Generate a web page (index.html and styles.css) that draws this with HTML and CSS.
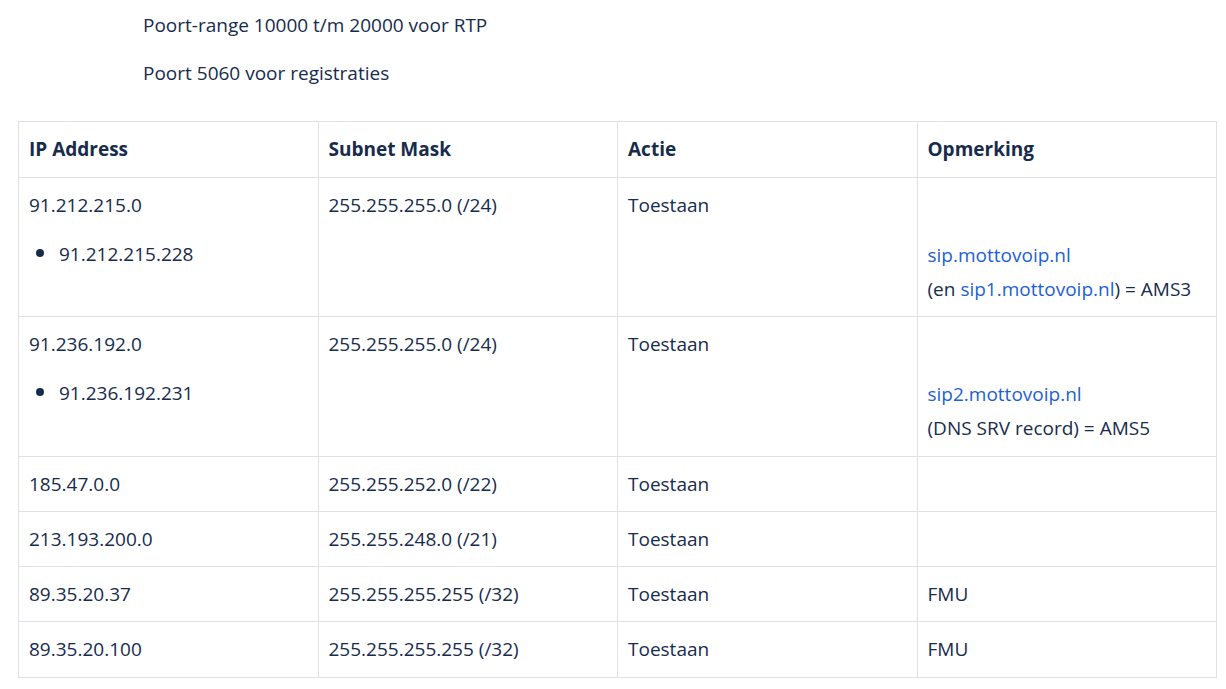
FILE: index.html
```html
<!DOCTYPE html>
<html lang="nl">
<head>
<meta charset="utf-8">
<title>Poorten en IP-adressen</title>
<link rel="stylesheet" href="styles.css">
</head>
<body>
<div class="page">
  <div class="intro">
    <p>Poort-range 10000 t/m 20000 voor RTP</p>
    <p>Poort 5060 voor registraties</p>
  </div>
  <table class="ip-table">
    <thead>
      <tr>
        <th>IP Address</th>
        <th>Subnet Mask</th>
        <th>Actie</th>
        <th>Opmerking</th>
      </tr>
    </thead>
    <tbody>
      <tr>
        <td>
          <p>91.212.215.0</p>
          <ul><li>91.212.215.228</li></ul>
        </td>
        <td><p>255.255.255.0 (/24)</p></td>
        <td><p>Toestaan</p></td>
        <td>
          <p>&nbsp;</p>
          <p><a href="#">sip.mottovoip.nl</a><br>(en <a href="#">sip1.mottovoip.nl</a>) = AMS3</p>
        </td>
      </tr>
      <tr>
        <td>
          <p>91.236.192.0</p>
          <ul><li>91.236.192.231</li></ul>
        </td>
        <td><p>255.255.255.0 (/24)</p></td>
        <td><p>Toestaan</p></td>
        <td>
          <p>&nbsp;</p>
          <p><a href="#">sip2.mottovoip.nl</a><br>(DNS SRV record) = AMS5</p>
        </td>
      </tr>
      <tr>
        <td><p>185.47.0.0</p></td>
        <td><p>255.255.252.0 (/22)</p></td>
        <td><p>Toestaan</p></td>
        <td></td>
      </tr>
      <tr>
        <td><p>213.193.200.0</p></td>
        <td><p>255.255.248.0 (/21)</p></td>
        <td><p>Toestaan</p></td>
        <td></td>
      </tr>
      <tr>
        <td><p>89.35.20.37</p></td>
        <td><p>255.255.255.255 (/32)</p></td>
        <td><p>Toestaan</p></td>
        <td><p>FMU</p></td>
      </tr>
      <tr>
        <td><p>89.35.20.100</p></td>
        <td><p>255.255.255.255 (/32)</p></td>
        <td><p>Toestaan</p></td>
        <td><p>FMU</p></td>
      </tr>
    </tbody>
  </table>
</div>
</body>
</html>
```
FILE: styles.css
```css
html, body {
  margin: 0;
  padding: 0;
  background: #ffffff;
}

body {
  font-family: "Open Sans", "Noto Sans", "Liberation Sans", sans-serif;
  font-size: 19px;
  line-height: 34px;
  color: #172b4d;
}

.page {
  padding: 8px 9px 0 18px;
}

.intro {
  padding-left: 125px;
}

.intro p {
  margin: 0 0 14px 0;
}

.ip-table {
  width: 1199px;
  border-collapse: collapse;
  table-layout: fixed;
  margin-top: 31px;
}

.ip-table th,
.ip-table td {
  border: 1px solid #dfe1e6;
  padding: 10px 10px 10.3px;
  text-align: left;
  vertical-align: top;
  width: 25%;
}

.ip-table th {
  font-weight: 700;
  color: #172b4d;
  padding-bottom: 11px;
}

.ip-table p {
  margin: 0;
}

.ip-table p + p {
  margin-top: 16px;
}

.ip-table ul {
  margin: 13px 0 0 0;
  padding-left: 30px;
}

.ip-table li::marker {
  font-size: 22px;
}

.ip-table a {
  color: #1d5fd4;
  text-decoration: none;
}
```
